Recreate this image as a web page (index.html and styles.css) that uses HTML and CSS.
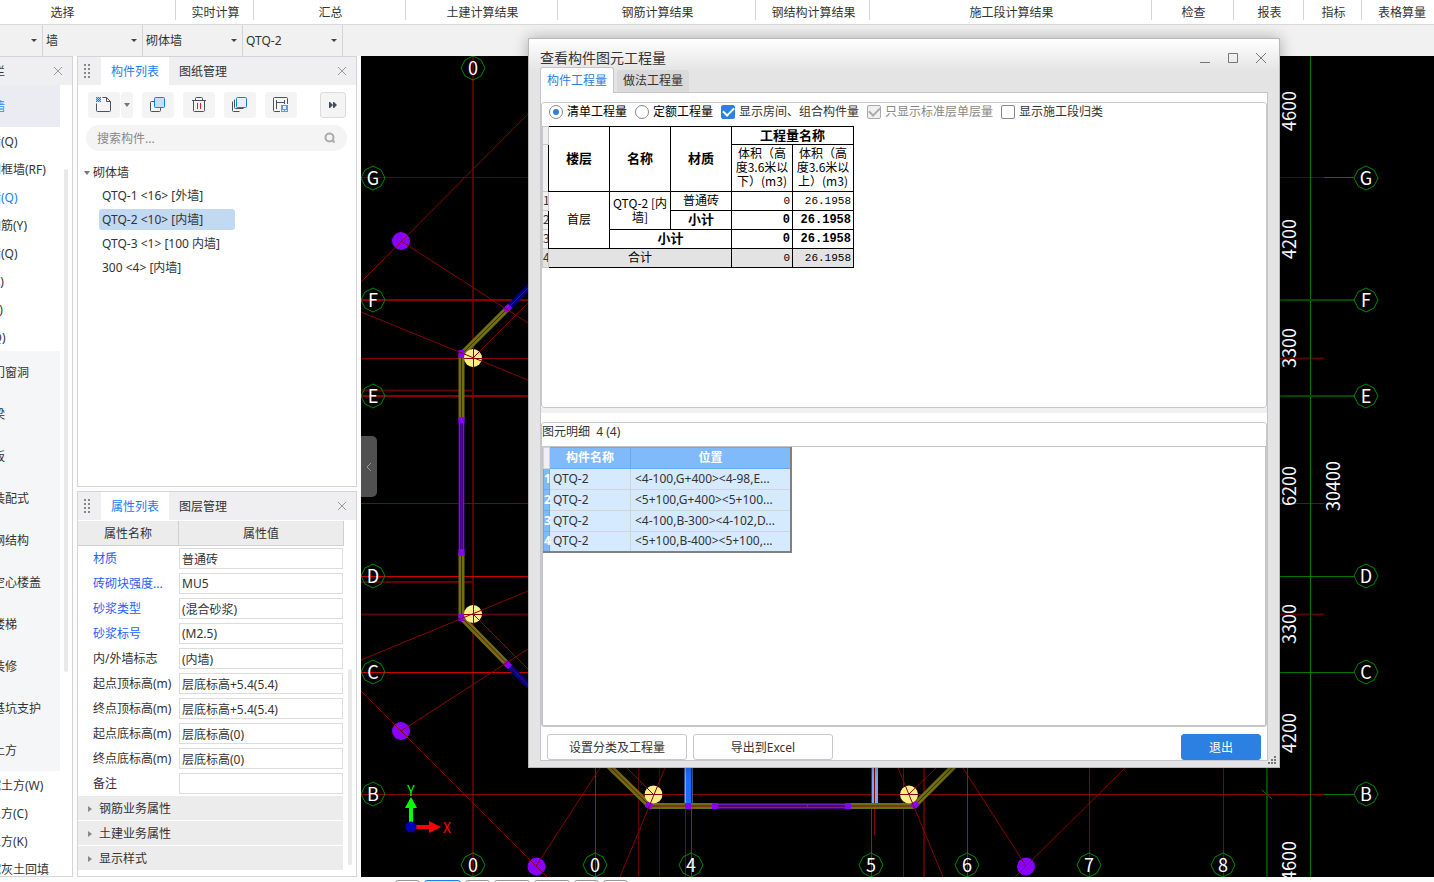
FILE: index.html
```html
<!DOCTYPE html>
<html lang="zh-CN">
<head>
  <meta charset="UTF-8">
  <meta name="viewport" content="width=device-width, initial-scale=1.0">
  <title>查看构件图元工程量</title>
  <link rel="stylesheet" href="styles.css">
</head>
<body>

  <!-- Ribbon -->
  <nav class="ribbon">
    <span class="w-select">选择</span>
    <span class="w-live">实时计算</span>
    <span class="w-sum">汇总</span>
    <span class="w-sum">土建计算结果</span>
    <span class="w-rebar">钢筋计算结果</span>
    <span class="w-steel">钢结构计算结果</span>
    <span class="w-stage">施工段计算结果</span>
    <span class="w-check">检查</span>
    <span class="w-report">报表</span>
    <span class="w-index">指标</span>
    <span class="w-last">表格算量</span>
  </nav>

  <!-- Combo bar -->
  <div class="combos">
    <div class="combo first"><select aria-label="楼层"><option></option></select></div>
    <div class="combo"><select aria-label="构件大类"><option>墙</option></select></div>
    <div class="combo"><select aria-label="构件类型"><option>砌体墙</option></select></div>
    <div class="combo"><select aria-label="构件"><option>QTQ-2</option></select></div>
  </div>

  <main class="work">

    <!-- Navigation -->
    <aside class="side">
      <header class="side-head">
        <span>导航栏</span>
        <button class="close" aria-label="关闭"><svg width="10" height="10"><path d="M1 1l8 8M9 1l-8 8"/></svg></button>
      </header>
      <div class="side-body">
        <ul class="side-list">
          <li class="big current"><a href="#">墙</a></li>
          <li><a href="#">剪力墙(Q)</a></li>
          <li><a href="#">人防门框墙(RF)</a></li>
          <li class="on"><a href="#">砌体墙(Q)</a></li>
          <li><a href="#">砌体加筋(Y)</a></li>
          <li><a href="#">保温墙(Q)</a></li>
          <li><a href="#">暗梁(A)</a></li>
          <li><a href="#">墙垛(E)</a></li>
          <li><a href="#">幕墙(Q)</a></li>
          <li class="big"><a href="#">门窗洞</a></li>
          <li class="big"><a href="#">梁</a></li>
          <li class="big"><a href="#">板</a></li>
          <li class="big"><a href="#">装配式</a></li>
          <li class="big"><a href="#">钢结构</a></li>
          <li class="big"><a href="#">空心楼盖</a></li>
          <li class="big"><a href="#">楼梯</a></li>
          <li class="big"><a href="#">装修</a></li>
          <li class="big"><a href="#">基坑支护</a></li>
          <li class="big"><a href="#">土方</a></li>
          <li><a href="#">大开挖土方(W)</a></li>
          <li><a href="#">基槽土方(C)</a></li>
          <li><a href="#">基坑土方(K)</a></li>
          <li><a href="#">大开挖灰土回填</a></li>
        </ul>
        <div class="side-scroll"></div>
      </div>
    </aside>

    <div class="panels">

      <!-- Component list -->
      <section class="panel panel-list">
        <header class="panel-head">
          <svg class="grip" width="8" height="16"><path d="M1 1h2v2h-2zM5 1h2v2h-2zM1 5h2v2h-2zM5 5h2v2h-2zM1 9h2v2h-2zM5 9h2v2h-2zM1 13h2v2h-2zM5 13h2v2h-2z"/></svg>
          <button class="tab active">构件列表</button>
          <button class="tab">图纸管理</button>
          <button class="close" aria-label="关闭"><svg width="10" height="10"><path d="M1 1l8 8M9 1l-8 8"/></svg></button>
        </header>
        <div class="tools">
          <div class="split">
            <button class="tool" aria-label="新建">
              <svg width="18" height="18"><path class="ink" d="M7.500 1.500h4l4 4v9a1 1 0 0 1-1 1h-12a1 1 0 0 1-1-1v-7M11.500 1.500v4h4"/><path class="dots" d="M1 1h5v5h-5z"/><path class="holes" d="M2 1h1v1h-1zM4 1h1v1h-1zM1 2h1v1h-1zM3 2h1v1h-1zM5 2h1v1h-1zM2 3h1v1h-1zM4 3h1v1h-1zM1 4h1v1h-1zM3 4h1v1h-1zM5 4h1v1h-1zM2 5h1v1h-1zM4 5h1v1h-1z"/></svg>
            </button>
            <button class="tool drop" aria-label="新建选项"><i class="down"></i></button>
          </div>
          <button class="tool" aria-label="复制">
            <svg width="18" height="18"><path class="ink" d="M5 5.500h-2.500a1 1 0 0 0-1 1v8a1 1 0 0 0 1 1h8a1 1 0 0 0 1-1v-2.500"/><rect class="blue" x="5.500" y="1.500" width="10" height="10" rx="1"/></svg>
          </button>
          <button class="tool" aria-label="删除">
            <svg width="18" height="18"><path class="ink" d="M2 4.500h14M3.500 4.500v10a1 1 0 0 0 1 1h9a1 1 0 0 0 1-1v-10M5.500 4.500v-2a1 1 0 0 1 1-1h5a1 1 0 0 1 1 1v2"/><path class="red" d="M7.500 7v6M10.500 7v6"/></svg>
          </button>
          <button class="tool" aria-label="层间复制">
            <svg width="18" height="18"><path class="ink" d="M3.500 3.500v8a1 1 0 0 0 1 1h8M1.500 5.500v9a1 1 0 0 0 1 1h6"/><rect class="blue light" x="5.500" y="1.500" width="10" height="10" rx="1"/></svg>
          </button>
          <button class="tool" aria-label="存档">
            <svg width="18" height="18"><path class="ink" d="M8 15.500h-5.500a1 1 0 0 1-1-1v-12a1 1 0 0 1 1-1h12a1 1 0 0 1 1 1v5.500M4.500 4v9M4.500 6.500h8M12.500 4v4"/><rect x="9" y="9" width="7" height="7" fill="#5b9bea"/><path d="M11 10h3v3h-3zM10 14h2v1h-2zM13 14h2v1h-2z" fill="#e3effc"/></svg>
          </button>
          <button class="tool more" aria-label="更多">
            <svg width="8" height="6"><path d="M0 0h1l3 3-3 3h-1zM4 0h1l3 3-3 3h-1z" fill="#454b59"/></svg>
          </button>
        </div>
        <div class="search">
          <input type="text" placeholder="搜索构件..." aria-label="搜索构件">
          <svg width="12" height="12"><circle cx="5.500" cy="5.500" r="4"/><path d="M8 8l2.500 2.500"/></svg>
        </div>
        <div class="tree">
          <div class="tree-root"><i class="down"></i>砌体墙</div>
          <ul>
            <li>QTQ-1 &lt;16&gt; [外墙]</li>
            <li class="picked">QTQ-2 &lt;10&gt; [内墙]</li>
            <li>QTQ-3 &lt;1&gt; [100 内墙]</li>
            <li>300 &lt;4&gt; [内墙]</li>
          </ul>
        </div>
      </section>

      <!-- Properties -->
      <section class="panel panel-props">
        <header class="panel-head">
          <svg class="grip" width="8" height="16"><path d="M1 1h2v2h-2zM5 1h2v2h-2zM1 5h2v2h-2zM5 5h2v2h-2zM1 9h2v2h-2zM5 9h2v2h-2zM1 13h2v2h-2zM5 13h2v2h-2z"/></svg>
          <button class="tab active">属性列表</button>
          <button class="tab">图层管理</button>
          <button class="close" aria-label="关闭"><svg width="10" height="10"><path d="M1 1l8 8M9 1l-8 8"/></svg></button>
        </header>
        <div class="props-body">
          <table class="props">
            <thead>
              <tr><th class="name">属性名称</th><th>属性值</th></tr>
            </thead>
            <tbody>
              <tr><td class="key"><label for="p1">材质</label></td><td><input id="p1" value="普通砖"></td></tr>
              <tr><td class="key"><label for="p2">砖砌块强度...</label></td><td><input id="p2" value="MU5"></td></tr>
              <tr><td class="key"><label for="p3">砂浆类型</label></td><td><input id="p3" value="(混合砂浆)"></td></tr>
              <tr><td class="key"><label for="p4">砂浆标号</label></td><td><input id="p4" value="(M2.5)"></td></tr>
              <tr><td><label for="p5">内/外墙标志</label></td><td><input id="p5" value="(内墙)"></td></tr>
              <tr><td><label for="p6">起点顶标高(m)</label></td><td><input id="p6" value="层底标高+5.4(5.4)"></td></tr>
              <tr><td><label for="p7">终点顶标高(m)</label></td><td><input id="p7" value="层底标高+5.4(5.4)"></td></tr>
              <tr><td><label for="p8">起点底标高(m)</label></td><td><input id="p8" value="层底标高(0)"></td></tr>
              <tr><td><label for="p9">终点底标高(m)</label></td><td><input id="p9" value="层底标高(0)"></td></tr>
              <tr><td><label for="p10">备注</label></td><td><input id="p10" value=""></td></tr>
              <tr><td colspan="2" class="fold"><button><i class="right"></i>钢筋业务属性</button></td></tr>
              <tr><td colspan="2" class="fold"><button><i class="right"></i>土建业务属性</button></td></tr>
              <tr><td colspan="2" class="fold"><button><i class="right"></i>显示样式</button></td></tr>
            </tbody>
          </table>
          <div class="props-scroll"></div>
        </div>
      </section>
    </div>

    <!-- Drawing -->
    <div class="canvas">
      <svg viewBox="361 56 1073 821" preserveAspectRatio="xMinYMin slice">
        <defs>
          <path id="bubble" d="M0-12L8-8 12 0 8 8 0 12-8 8-12 0-8-8z"/>
        </defs>

        <g class="axis dim">
          <path class="w2" d="M473 56V877M924 768V877M361 390.500H473M361 582H473M361 614.500H528M1280 614.500H1324M1280 358.500H1324"/>
          <path d="M361 177.500H1324M638.500 768V877M659.500 768V877"/>
        </g>
        <g class="axis mid">
          <path class="w2" d="M361 300H528M361 396H528"/>
          <path d="M361 358.500H528M361 503.500H528M1280 503.500H1324M361 794.500H1324M685.500 768V877M874.500 768V835M903.500 768V877M1089.500 768V877M1223.500 768V877"/>
        </g>
        <g class="axis hot">
          <path d="M361 576.500H528M361 672.500H528M595.500 768V877M691.500 768V877M871.500 768V877M967.500 768V877"/>
        </g>
        <g class="axis green">
          <path d="M1310.500 56V877M1324 177.500H1354M1324 794.500H1354M1280 576.500H1354M1280 672.500H1354M1262 790L1272 799"/>
          <path class="deep" d="M1267 768V877M1280 300H1354M1280 396H1354"/>
        </g>

        <!-- walls -->
        <g class="wall olive">
          <path d="M461.500 354V420M461.500 553V618M462 354L508 308M462 618L508 665M605 762L650 806M650 806H712M851 806H914M914 806L956 764"/>
        </g>
        <g class="wall navy"><path d="M508 308L534 282M508 665L534 691"/></g>
        <g class="wall violet"><path d="M461.500 419V553M714 806H850"/></g>
        <g class="axis seam"><path d="M461.500 354V618M462 354L534 282M462 618L534 691M605 762L650 806M914 806L956 764M650 806H914"/></g>
        <g class="wall node">
          <path d="M461.500 350V358M461.500 417V423M461.500 549V556M461.500 614V621M505 311L510 306M505 662L510 667M712 806H718M845 806H851M646 804L652 807M912 807L918 803M685 806H691"/>
        </g>
        <g class="axis rim"><path d="M459.500 423V549M463.500 423V549M718 804.500H845M718 807.500H845M807.500 804V808"/></g>
        <path d="M688.500 768V803" stroke="#76a7f4" stroke-width="8"/>
        <path d="M688.500 768V803" stroke="#1b6cff" stroke-width="5"/>
        <path d="M874.500 768V803" stroke="#76a7f4" stroke-width="7"/>
        <path d="M874.500 768V803M691.500 768V803" stroke="#8b0000"/>
        <path d="M871.500 768V803" stroke="#d00000"/>

        <g class="column"><circle cx="473" cy="358" r="9"/><circle cx="473" cy="614" r="9"/><circle cx="653.500" cy="794.500" r="9"/><circle cx="909" cy="794.500" r="9"/></g>
        <g class="pile"><circle cx="401" cy="241" r="9"/><circle cx="401" cy="731" r="9"/><circle cx="536.500" cy="866.500" r="9"/><circle cx="1026" cy="866.500" r="9"/></g>

        <g class="axis mid diag">
          <path d="M361 282L534 108M401 241L528 323M361 312L528 380M473 358L528 303"/>
          <path d="M361 691L547 877M401 731L528 649M361 660L528 591M473 614L534 675"/>
          <path d="M536 866L600 768M627 768L653 794M665 768L620 877M936 768L909 794M898 768L943 877M963 768L1026 866M1125 768L1015 877"/>
          <path d="M464 358.500H482M464 614.500H482M473.500 349V367M473.500 605V623M644 794.500H663M900 794.500H918"/>
        </g>

        <g class="bubbles">
          <use href="#bubble" x="473" y="68"/>
          <use href="#bubble" x="373" y="178"/><use href="#bubble" x="373" y="300"/><use href="#bubble" x="373" y="396"/>
          <use href="#bubble" x="373" y="576"/><use href="#bubble" x="373" y="672"/><use href="#bubble" x="373" y="794"/>
          <use href="#bubble" x="1366" y="178"/><use href="#bubble" x="1366" y="300"/><use href="#bubble" x="1366" y="396"/>
          <use href="#bubble" x="1366" y="576"/><use href="#bubble" x="1366" y="672"/><use href="#bubble" x="1366" y="794"/>
          <use href="#bubble" x="473" y="865"/><use href="#bubble" x="595" y="865"/><use href="#bubble" x="691" y="865"/>
          <use href="#bubble" x="871" y="865"/><use href="#bubble" x="967" y="865"/><use href="#bubble" x="1089" y="865"/><use href="#bubble" x="1223" y="865"/>
        </g>
        <g class="marks">
          <text x="473" y="75">0</text>
          <text x="373" y="185">G</text><text x="373" y="307">F</text><text x="373" y="403">E</text>
          <text x="373" y="583">D</text><text x="373" y="679">C</text><text x="373" y="801">B</text>
          <text x="1366" y="185">G</text><text x="1366" y="307">F</text><text x="1366" y="403">E</text>
          <text x="1366" y="583">D</text><text x="1366" y="679">C</text><text x="1366" y="801">B</text>
          <text x="473" y="872">0</text><text x="595" y="872">0</text><text x="691" y="872">4</text><text x="871" y="872">5</text>
          <text x="967" y="872">6</text><text x="1089" y="872">7</text><text x="1223" y="872">8</text>
        </g>
        <g class="marks">
          <text transform="translate(1296 111) rotate(-90)">4600</text>
          <text transform="translate(1296 239) rotate(-90)">4200</text>
          <text transform="translate(1296 348) rotate(-90)">3300</text>
          <text transform="translate(1296 486) rotate(-90)">6200</text>
          <text transform="translate(1340 486) rotate(-90)">30400</text>
          <text transform="translate(1296 624) rotate(-90)">3300</text>
          <text transform="translate(1296 733) rotate(-90)">4200</text>
          <text transform="translate(1296 861) rotate(-90)">4600</text>
        </g>

        <!-- coordinate axes -->
        <path d="M409 823V808H405L411 797 417 808H413V823z" fill="#00ff00"/>
        <path d="M415 825H429V821L441 827 429 833V829H415z" fill="#ff0000"/>
        <circle cx="411" cy="827" r="5.500" fill="#0000b4"/>
        <text class="xy" x="411" y="796" fill="#00ff00">Y</text>
        <text class="xy" x="447" y="833" fill="#ff0000">X</text>
      </svg>
      <button class="handle" aria-label="收起"><svg width="6" height="10"><path d="M5 1L1 5l4 4"/></svg></button>
    </div>
  </main>

  <!-- Status strip -->
  <footer class="strip">
    <button aria-label="1"></button>
    <button class="on" aria-label="2"></button>
    <button aria-label="3"></button>
    <button class="wide" aria-label="4"></button>
    <button class="wide" aria-label="5"></button>
    <button aria-label="6"></button>
    <button aria-label="7"></button>
  </footer>

  <!-- Quantity dialog -->
  <div class="dialog" role="dialog" aria-labelledby="dlg-title">
    <header class="dlg-title">
      <h1 id="dlg-title">查看构件图元工程量</h1>
      <button aria-label="最小化"><svg width="12" height="12"><path d="M1 10.500h10"/></svg></button>
      <button aria-label="最大化"><svg width="12" height="12"><path d="M1.500 1.500h9v9h-9z"/></svg></button>
      <button aria-label="关闭"><svg width="12" height="12"><path d="M1 1l10 10M11 1L1 11"/></svg></button>
    </header>
    <div class="dlg-tabs">
      <button class="active">构件工程量</button>
      <button>做法工程量</button>
    </div>
    <div class="dlg-body">
      <section class="box">
        <div class="options">
          <label class="strong"><input type="radio" name="kind" checked>清单工程量</label>
          <label class="strong"><input type="radio" name="kind">定额工程量</label>
          <label><input type="checkbox" checked>显示房间、组合构件量</label>
          <label class="off"><input type="checkbox" checked disabled>只显示标准层单层量</label>
          <label><input type="checkbox">显示施工段归类</label>
        </div>
        <table class="qty">
          <colgroup><col class="c-no"><col><col><col><col><col></colgroup>
          <tr class="r-top">
            <td class="no"></td>
            <th rowspan="2">楼层</th><th rowspan="2">名称</th><th rowspan="2">材质</th>
            <th colspan="2">工程量名称</th>
          </tr>
          <tr class="r-head">
            <td class="no"></td>
            <td>体积（高<br>度3.6米以<br>下）(m3)</td>
            <td>体积（高<br>度3.6米以<br>上）(m3)</td>
          </tr>
          <tr>
            <td class="no">1</td><td rowspan="3">首层</td><td rowspan="2">QTQ-2 [内<br>墙]</td><td>普通砖</td>
            <td class="num">0</td><td class="num">26.1958</td>
          </tr>
          <tr>
            <td class="no">2</td><th>小计</th><th class="num">0</th><th class="num">26.1958</th>
          </tr>
          <tr>
            <td class="no">3</td><th colspan="2">小计</th><th class="num">0</th><th class="num">26.1958</th>
          </tr>
          <tr class="total">
            <td class="no">4</td><td colspan="3">合计</td><td class="num">0</td><td class="num">26.1958</td>
          </tr>
        </table>
      </section>
      <div class="splitter"></div>
      <section class="box lower">
        <h2>图元明细&nbsp; 4 (4)</h2>
        <div class="detail-area">
          <table class="detail">
            <colgroup><col class="d-no"><col class="d-name"><col></colgroup>
            <tr><td class="corner"></td><th>构件名称</th><th>位置</th></tr>
            <tr><th>1</th><td>QTQ-2</td><td>&lt;4-100,G+400&gt;&lt;4-98,E...</td></tr>
            <tr><th>2</th><td>QTQ-2</td><td>&lt;5+100,G+400&gt;&lt;5+100...</td></tr>
            <tr><th>3</th><td>QTQ-2</td><td>&lt;4-100,B-300&gt;&lt;4-102,D...</td></tr>
            <tr><th>4</th><td>QTQ-2</td><td>&lt;5+100,B-400&gt;&lt;5+100,...</td></tr>
          </table>
        </div>
      </section>
      <div class="actions">
        <button>设置分类及工程量</button>
        <button>导出到Excel</button>
        <button class="primary">退出</button>
      </div>
    </div>
    <svg class="resize" width="8" height="8"><path d="M6 0h2v2h-2zM3 3h2v2h-2zM6 3h2v2h-2zM0 6h2v2h-2zM3 6h2v2h-2zM6 6h2v2h-2z"/></svg>
  </div>

</body>
</html>
```
FILE: styles.css
```css
* {
  box-sizing: border-box;
}

html, body {
  height: 100%;
}

body {
  margin: 0;
  display: flex;
  flex-direction: column;
  overflow: hidden;
  position: relative;
  background: #fcfcfc;
  color: #333;
  font-family: "Noto Sans", "Noto Sans CJK SC", sans-serif;
  font-size: 12px;
  line-height: 18px;
}

button, input, select {
  font: inherit;
  color: inherit;
  margin: 0;
}

button {
  border: none;
  background: none;
  padding: 0;
}

ul {
  list-style: none;
  margin: 0;
  padding: 0;
}

a {
  color: inherit;
  text-decoration: none;
}

svg {
  display: block;
}

table {
  border-spacing: 0;
}

.down {
  border: 3px solid transparent;
  border-top: 4px solid #777;
  border-bottom: none;
}

.right {
  border: 3px solid transparent;
  border-left: 4px solid #888;
  border-right: none;
}

.close {
  margin-left: auto;
  width: 28px;
  height: 28px;
  display: flex;
  align-items: center;
  justify-content: center;
}

.close svg {
  fill: none;
  stroke: #999;
}

/* RIBBON */
.ribbon {
  display: flex;
  flex: none;
  height: 25px;
  padding-bottom: 4px;
  background: #fff;
  border-bottom: 1px solid #d9d9d9;
}

.ribbon span {
  flex: none;
  height: 20px;
  padding: 4px 0 0 2px;
  line-height: 18px;
  text-align: center;
  border-right: 1px solid #d4d4d4;
}

.ribbon .w-select { width: 176px; padding-right: 52px; }
.ribbon .w-live { width: 78px; }
.ribbon .w-sum { width: 152px; }
.ribbon .w-rebar { width: 198px; }
.ribbon .w-steel { width: 114px; }
.ribbon .w-stage { width: 282px; }
.ribbon .w-check { width: 82px; }
.ribbon .w-report { width: 70px; }
.ribbon .w-index { width: 58px; }
.ribbon .w-last { flex: 1; padding-left: 8px; border: none; }

/* COMBOS */
.combos {
  display: flex;
  flex: none;
  height: 31px;
  background: #f1f1f1;
}

.combo {
  position: relative;
  width: 100px;
  border-right: 1px solid #d4d4d4;
}

.combo.first {
  width: 43px;
}

.combo select {
  width: 100%;
  height: 100%;
  padding: 0 16px 0 3px;
  border: none;
  background: none;
  appearance: none;
}

.combo::after {
  content: "";
  position: absolute;
  right: 5px;
  top: 14px;
  border: 3px solid transparent;
  border-top: 3px solid #444;
  border-bottom: none;
  pointer-events: none;
}

.work {
  flex: 1;
  min-height: 0;
  display: flex;
}

/* NAVIGATION */
.side {
  flex: none;
  width: 73px;
  margin-right: 4px;
  display: flex;
  flex-direction: column;
  overflow: hidden;
  background: #fff;
  border: 1px solid #d4d4d4;
  border-left: none;
}

.side-head {
  display: flex;
  flex: none;
  align-items: center;
  height: 28px;
  background: #efeff1;
}

.side-head span {
  flex: none;
  margin-left: -31px;
  padding-top: 2px;
}

.side-body {
  flex: 1;
  min-height: 0;
  display: flex;
  justify-content: space-between;
}

.side-list {
  flex: none;
  width: 100px;
  margin-left: -40px;
  overflow: hidden;
  white-space: nowrap;
}

.side-list li {
  height: 28px;
  line-height: 30px;
  padding-left: 5px;
}

.side-list li.big {
  height: 42px;
  line-height: 44px;
  padding-left: 33px;
  background: #f5f6f8;
}

.side-list li.current {
  background: #ebecf1;
  color: #3c8cf0;
}

.side-list li.on {
  color: #1a7cf5;
}

.side-scroll {
  width: 4px;
  height: 503px;
  margin: 84px 4px 0 0;
  background: #e9e9e9;
  border-radius: 2px;
}

/* PANELS */
.panels {
  flex: none;
  width: 280px;
  margin-right: 4px;
  display: flex;
  flex-direction: column;
  gap: 4px;
}

.panel {
  background: #fff;
  border: 1px solid #d4d4d4;
}

.panel-list {
  flex: 1;
  min-height: 0;
}

.panel-props {
  flex: none;
}

.panel-head {
  display: flex;
  align-items: center;
  height: 28px;
  background: #efeff1;
}

.panel-props .panel-head {
  height: 29px;
  border-bottom: 1px solid #fff;
}

.grip {
  margin: 0 10px 0 5px;
  fill: #888;
}

.tab {
  height: 100%;
  padding: 2px 10px 0;
}

.tab.active {
  background: #fff;
  color: #1a7cf5;
}

.tools {
  display: flex;
  gap: 9px;
  padding: 7px 10px;
}

.split {
  display: flex;
  gap: 1px;
}

.tool {
  width: 32px;
  height: 26px;
  display: flex;
  align-items: center;
  justify-content: center;
  background: #f4f4f5;
  border-radius: 3px;
}

.tool.drop {
  width: 12px;
}

.tool.more {
  width: 26px;
  margin-left: auto;
  border: 1px solid #dcdcdf;
}

.ink {
  fill: none;
  stroke: #4a5164;
}

.dots {
  fill: #1a7cf5;
}

.holes {
  fill: #a9cbf7;
}

.blue {
  fill: #c9ddf7;
  stroke: #1a7cf5;
}

.blue.light {
  fill: #e6f0fd;
}

.red {
  fill: none;
  stroke: #e02020;
}

.search {
  display: flex;
  align-items: center;
  height: 26px;
  margin: 0 9px 0 8px;
  padding: 0 11px;
  background: #f4f4f4;
  border-radius: 13px;
}

.search input {
  flex: 1;
  min-width: 0;
  padding: 2px 0 0;
  border: none;
  background: none;
  outline: none;
}

.search input::placeholder {
  color: #888;
}

.search svg {
  fill: none;
  stroke: #aaa;
  stroke-width: 2;
}

.tree {
  padding-top: 10px;
}

.tree-root {
  display: flex;
  align-items: center;
  gap: 3px;
  height: 24px;
  padding-left: 6px;
}

.tree li {
  width: 136px;
  height: 21px;
  margin: 0 0 3px 21px;
  padding-left: 3px;
  line-height: 22px;
  border-radius: 3px;
  white-space: nowrap;
}

.tree li.picked {
  background: #c2d9f2;
}

/* PROPERTIES */
.props-body {
  display: flex;
  height: 355px;
}

.props {
  width: 266px;
  height: 350px;
  table-layout: fixed;
}

.props th {
  height: 25px;
  padding: 2px 0 0;
  font-weight: normal;
  background: #ececec;
  border-right: 1px solid #d0d0d0;
  border-bottom: 1px solid #d0d0d0;
}

.props .name {
  width: 101px;
}

.props td {
  height: 25px;
  padding: 0 0 0 15px;
  white-space: nowrap;
}

.props td + td {
  padding: 0 1px 0 0;
}

.props .key {
  color: #1a62ff;
}

.props input {
  display: block;
  width: 100%;
  height: 21px;
  padding: 0 2px;
  border: 1px solid #dcdcdc;
  background: #fff;
}

.props td.fold {
  padding: 0 1px 1px 0;
}

.fold button {
  display: flex;
  align-items: center;
  width: 100%;
  height: 24px;
  padding: 2px 0 0 10px;
  gap: 7px;
  background: #ececec;
}

.props-scroll {
  width: 4px;
  height: 196px;
  margin: 148px 0 0 4px;
  background: #e9e9e9;
  border-radius: 2px;
}

/* DRAWING */
.canvas {
  flex: 1;
  min-width: 0;
  position: relative;
  overflow: hidden;
  background: #000;
}

.canvas > svg {
  width: 100%;
  height: 100%;
}

.axis {
  fill: none;
  stroke-width: 1;
}

.w2 {
  stroke-width: 2;
}

.dim {
  stroke: #5c0000;
}

.mid {
  stroke: #8b0000;
}

.hot {
  stroke: #d00000;
}

.green {
  stroke: #007800;
}

.deep {
  stroke: #004a00;
  stroke-width: 2;
}

.wall {
  fill: none;
  stroke-width: 6;
}

.olive {
  stroke: #6e6e14;
}

.navy {
  stroke: #00008c;
}

.violet {
  stroke: #48008c;
}

.node {
  stroke: #8a00ff;
}

.seam {
  stroke: #7a0a14;
}

.rim {
  stroke: #6a20b8;
}

.column {
  fill: #ffee88;
}

.pile {
  fill: #8a00ff;
}

.bubbles {
  fill: none;
  stroke: #008a00;
}

.marks {
  fill: #fff;
  font-family: "Noto Sans CJK SC", sans-serif;
  font-size: 18px;
  text-anchor: middle;
}

.xy {
  font-family: "Noto Sans CJK SC", sans-serif;
  font-size: 14px;
  text-anchor: middle;
}

.handle {
  position: absolute;
  left: 0;
  top: 380px;
  width: 16px;
  height: 61px;
  display: flex;
  align-items: center;
  justify-content: center;
  background: #505050;
  border-radius: 0 5px 5px 0;
}

.handle svg {
  fill: none;
  stroke: #999;
}

.strip {
  display: flex;
  flex: none;
  gap: 4px;
  height: 5px;
  padding: 3px 0 0 395px;
  overflow: hidden;
}

.strip button {
  width: 25px;
  height: 18px;
  border: 1px solid #999;
  border-radius: 3px;
}

.strip .wide {
  width: 36px;
}

.strip .on {
  width: 37px;
  border-color: #1a7cf5;
  background: #d6e8fc;
}

/* DIALOG */
.dialog {
  position: absolute;
  left: 528px;
  top: 38px;
  width: 752px;
  height: 730px;
  display: flex;
  flex-direction: column;
  padding: 0 11px 6px;
  background: linear-gradient(#fff, #e4e4e4 32px);
  border: 1px solid #b8b8b8;
  box-shadow: 0 0 14px rgba(0, 0, 0, 0.3);
}

.dlg-title {
  display: flex;
  align-items: center;
  flex: none;
  height: 28px;
  padding-top: 10px;
}

.dlg-title h1 {
  flex: 1;
  margin: 0;
  font-size: 14px;
  font-weight: normal;
}

.dlg-title button {
  width: 28px;
  display: flex;
  justify-content: center;
}

.dlg-title button:last-child {
  width: 14px;
  margin-left: 7px;
}

.dlg-title svg {
  fill: none;
  stroke: #777;
}

.dlg-tabs {
  display: flex;
  align-items: flex-end;
  flex: none;
  gap: 3px;
  height: 25px;
}

.dlg-tabs button {
  height: 22px;
  padding: 0 6px;
  background: #dadada;
  border-radius: 3px 3px 0 0;
}

.dlg-tabs .active {
  height: 26px;
  margin-bottom: -1px;
  background: #fff;
  border: 1px solid #c4c6cc;
  border-bottom: none;
  color: #2c80e2;
  z-index: 1;
}

.dlg-body {
  flex: 1;
  min-height: 0;
  display: flex;
  flex-direction: column;
  padding-top: 9px;
  background: #fff;
  border: 1px solid #c4c6cc;
}

.box {
  flex: 1;
  min-height: 0;
  display: flex;
  flex-direction: column;
  border: 1px solid #c8c8c8;
  border-radius: 3px;
}

.splitter {
  flex: none;
  height: 5px;
  margin-bottom: 9px;
  background: #f0f0f0;
}

.options {
  display: flex;
  gap: 8px;
  height: 23px;
  padding-left: 7px;
}

.options label {
  display: flex;
  align-items: center;
  gap: 4px;
  padding-bottom: 5px;
}

.options .strong {
  color: #000;
}

.options .off {
  color: #888;
}

.options input {
  appearance: none;
  width: 14px;
  height: 14px;
  border: 1px solid #888;
  border-radius: 2px;
  background: #fff;
  display: flex;
  align-items: center;
  justify-content: center;
}

.options input[type="radio"] {
  border-radius: 50%;
}

.options input[type="radio"]:checked::after {
  content: "";
  width: 6px;
  height: 6px;
  border-radius: 50%;
  background: #2c80e2;
}

.options input[type="checkbox"]:checked {
  background: #2c80e2;
  border-color: #2c80e2;
}

.options input[type="checkbox"]:checked::after {
  content: "";
  width: 9px;
  height: 5px;
  margin-bottom: 3px;
  border: 2px solid #fff;
  border-top: none;
  border-right: none;
  transform: rotate(-45deg);
}

.options input[type="checkbox"]:disabled {
  background: #f0f0f0;
  border-color: #aaa;
}

.options input[type="checkbox"]:disabled::after {
  border-color: #aaa;
}

/* QUANTITY TABLE */
.qty {
  width: 312px;
  border-collapse: collapse;
  table-layout: fixed;
  color: #000;
  font-family: "Noto Sans CJK SC", sans-serif;
  line-height: 14px;
}

.c-no {
  width: 6px;
}

.qty tr {
  height: 19px;
}

.qty .r-top {
  height: 18px;
}

.qty .r-head {
  height: 47px;
}

.qty td, .qty th {
  padding: 0 0 2px;
  text-align: center;
  border: 1px solid #000;
}

.qty th {
  font-size: 13px;
}

.qty .no {
  overflow: hidden;
  background: #f0f0f0;
  border-color: #c8c8c8;
  color: #333;
}

.qty .num {
  padding: 0 2px 0 0;
  text-align: right;
  font-family: "Liberation Mono", monospace;
  font-size: 11px;
}

.qty th.num {
  font-size: 12px;
}

.qty .total td {
  background: #e3e3e3;
}

/* DETAIL TABLE */
.lower h2 {
  height: 23px;
  margin: 0;
  font-size: 12px;
  font-weight: normal;
}

.detail-area {
  flex: 1;
  border: 1px solid #c4c4c4;
}

.detail {
  width: 249px;
  border-collapse: collapse;
  table-layout: fixed;
  border-right: 2px solid #808080;
  border-bottom: 2px solid #808080;
}

.d-no {
  width: 6px;
}

.d-name {
  width: 81px;
}

.detail tr {
  height: 21px;
}

.detail th {
  padding: 0;
  background: #80bafa;
  border: 1px solid #68a8ee;
  color: #fff;
}

.detail td {
  padding: 0 0 0 4px;
  overflow: hidden;
  white-space: nowrap;
  background: #d6eaff;
  border: 1px solid #d4d4d4;
}

.detail td:nth-child(2) {
  padding-left: 3px;
}

.detail .corner {
  background: #f0f0f0;
}

.actions {
  display: flex;
  flex: none;
  gap: 6px;
  padding: 7px 6px 0;
}

.actions button {
  width: 140px;
  height: 26px;
  padding-top: 2px;
  background: #fff;
  border: 1px solid #c8c8c8;
  border-radius: 3px;
}

.actions .primary {
  width: 80px;
  margin-left: auto;
  background: #2c80e2;
  border-color: #2c80e2;
  color: #fff;
}

.resize {
  position: absolute;
  right: 3px;
  bottom: 3px;
  fill: #777;
}
```
